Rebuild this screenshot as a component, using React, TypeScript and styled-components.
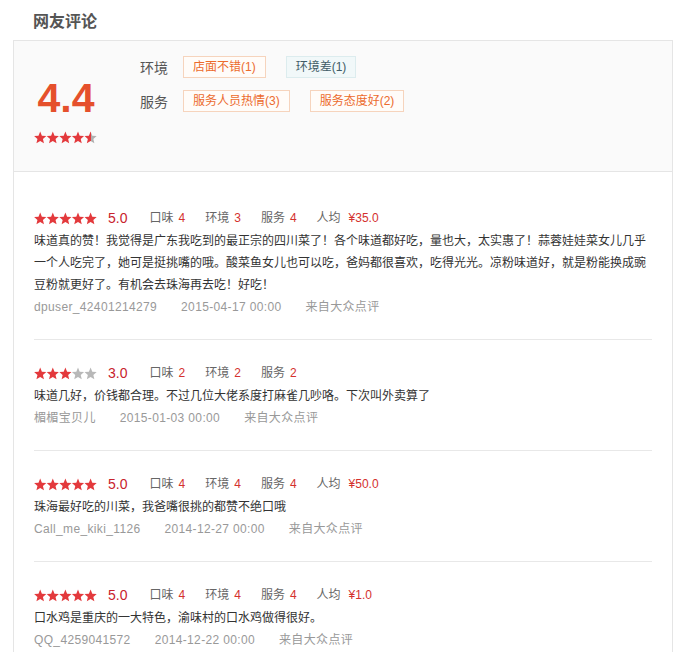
import * as React from 'react';
import styled, { createGlobalStyle } from 'styled-components';

const GlobalStyle = createGlobalStyle`
  html, body {
    margin: 0;
    padding: 0;
    background: #fff;
  }
  body {
    font-family: "Liberation Sans", Arial, "Noto Sans CJK SC", sans-serif;
    font-size: 12px;
    color: #333;
  }
`;

type Review = {
  score: number;
  taste: number;
  env: number;
  service: number;
  price?: string;
  text: string;
  user: string;
  time: string;
};

const reviews: Review[] = [
  {
    score: 5,
    taste: 4,
    env: 3,
    service: 4,
    price: '¥35.0',
    text: '味道真的赞！我觉得是广东我吃到的最正宗的四川菜了！各个味道都好吃，量也大，太实惠了！蒜蓉娃娃菜女儿几乎一个人吃完了，她可是挺挑嘴的哦。酸菜鱼女儿也可以吃，爸妈都很喜欢，吃得光光。凉粉味道好，就是粉能换成豌豆粉就更好了。有机会去珠海再去吃！好吃！',
    user: 'dpuser_42401214279',
    time: '2015-04-17 00:00',
  },
  {
    score: 3,
    taste: 2,
    env: 2,
    service: 2,
    text: '味道几好，价钱都合理。不过几位大佬系度打麻雀几吵咯。下次叫外卖算了',
    user: '楣楣宝贝儿',
    time: '2015-01-03 00:00',
  },
  {
    score: 5,
    taste: 4,
    env: 4,
    service: 4,
    price: '¥50.0',
    text: '珠海最好吃的川菜，我爸嘴很挑的都赞不绝口哦',
    user: 'Call_me_kiki_1126',
    time: '2014-12-27 00:00',
  },
  {
    score: 5,
    taste: 4,
    env: 4,
    service: 4,
    price: '¥1.0',
    text: '口水鸡是重庆的一大特色，渝味村的口水鸡做得很好。',
    user: 'QQ_4259041572',
    time: '2014-12-22 00:00',
  },
];

const starPoints = (cx: number, cy: number, r: number) => {
  const pts: string[] = [];
  for (let i = 0; i < 10; i++) {
    const rad = i % 2 === 0 ? r : r * 0.45;
    const a = (Math.PI / 5) * i - Math.PI / 2;
    pts.push(`${(cx + rad * Math.cos(a)).toFixed(2)},${(cy + rad * Math.sin(a)).toFixed(2)}`);
  }
  return pts.join(' ');
};

let gradId = 0;

const Stars = ({ value }: { value: number }) => {
  const id = React.useMemo(() => `star-half-${gradId++}`, []);
  const pitch = 12.6;
  return (
    <StarSvg width={64} height={13} viewBox="0 0 64 13">
      <defs>
        <linearGradient id={id} x1="0" x2="1" y1="0" y2="0">
          <stop offset="50%" stopColor="#e3393c" />
          <stop offset="50%" stopColor="#b0b0b0" />
        </linearGradient>
      </defs>
      {[0, 1, 2, 3, 4].map((i) => {
        const fill =
          value >= i + 1 ? '#e3393c' : value > i ? `url(#${id})` : '#b8b8b8';
        return <polygon key={i} points={starPoints(6.2 + i * pitch, 7, 6.4)} fill={fill} />;
      })}
    </StarSvg>
  );
};

export default function App() {
  return (
    <>
      <GlobalStyle />
      <Page>
        <Title>网友评论</Title>
        <Box>
          <Summary>
            <ScoreCol>
              <BigScore>4.4</BigScore>
              <Stars value={4.5} />
            </ScoreCol>
            <TagGroups>
              <TagRow>
                <TagLabel>环境</TagLabel>
                <Tag>店面不错(1)</Tag>
                <Tag $bad>环境差(1)</Tag>
              </TagRow>
              <TagRow>
                <TagLabel>服务</TagLabel>
                <Tag>服务人员热情(3)</Tag>
                <Tag>服务态度好(2)</Tag>
              </TagRow>
            </TagGroups>
          </Summary>
          <List>
            {reviews.map((r, i) => (
              <Item key={i}>
                <RatingRow>
                  <Stars value={r.score} />
                  <Score>{r.score.toFixed(1)}</Score>
                  <Metric>
                    口味<Value>{r.taste}</Value>
                  </Metric>
                  <Metric>
                    环境<Value>{r.env}</Value>
                  </Metric>
                  <Metric>
                    服务<Value>{r.service}</Value>
                  </Metric>
                  {r.price && (
                    <Metric>
                      人均<Value $price>{r.price}</Value>
                    </Metric>
                  )}
                </RatingRow>
                <Text>{r.text}</Text>
                <Meta>
                  <MetaItem>{r.user}</MetaItem>
                  <MetaItem>{r.time}</MetaItem>
                  <MetaItem>来自大众点评</MetaItem>
                </Meta>
              </Item>
            ))}
          </List>
        </Box>
      </Page>
    </>
  );
}

const Page = styled.div`
  width: 688px;
`;

const Title = styled.h2`
  margin: 0 0 0 33px;
  height: 40px;
  line-height: 40px;
  font-size: 16px;
  font-weight: bold;
  color: #555;
  font-family: "Noto Sans CJK SC", sans-serif;
`;

const Box = styled.div`
  margin-left: 13px;
  width: 658px;
  border: 1px solid #e5e5e5;
  border-bottom: none;
`;

const Summary = styled.div`
  display: flex;
  height: 130px;
  background: #fafafa;
  border-bottom: 1px solid #e5e5e5;
`;

const ScoreCol = styled.div`
  width: 104px;
  display: flex;
  flex-direction: column;
  align-items: center;
  padding-top: 36px;
  box-sizing: border-box;
`;

const BigScore = styled.div`
  font-family: "Liberation Sans", Arial, sans-serif;
  font-size: 41px;
  line-height: 42px;
  font-weight: bold;
  color: #e5502c;
  margin-bottom: 12px;
`;

const StarSvg = styled.svg`
  display: block;
  flex: none;
`;

const TagGroups = styled.div`
  padding: 15px 0 0 22px;
  display: flex;
  flex-direction: column;
  gap: 12px;
`;

const TagRow = styled.div`
  display: flex;
  align-items: center;
  gap: 20px;
`;

const TagLabel = styled.span`
  font-family: "Noto Sans CJK SC", sans-serif;
  font-size: 14px;
  color: #555;
  white-space: nowrap;
  width: 28px;
  margin-right: -5px;
`;

const Tag = styled.span<{ $bad?: boolean }>`
  display: inline-block;
  white-space: nowrap;
  height: 20px;
  line-height: 20px;
  padding: 0 9px;
  font-size: 12px;
  border: 1px solid ${(p) => (p.$bad ? '#dcecee' : '#f6d4bd')};
  background: ${(p) => (p.$bad ? '#f1f8f9' : '#fffcf9')};
  color: ${(p) => (p.$bad ? '#3f5b66' : '#ec6b2d')};
`;

const List = styled.div`
  padding-top: 13px;
`;

const Item = styled.div`
  margin: 0 20px;
  padding: 22px 0 21px;
  & + & {
    border-top: 1px solid #e8e8e8;
  }
`;

const RatingRow = styled.div`
  display: flex;
  align-items: center;
  height: 22px;
`;

const Score = styled.span`
  margin: 0 22px 0 10px;
  font-size: 14px;
  color: #c8232c;
  line-height: 22px;
`;

const Metric = styled.span`
  margin-right: 20px;
  font-size: 12px;
  color: #666;
  line-height: 22px;
`;

const Value = styled.span<{ $price?: boolean }>`
  margin-left: ${(p) => (p.$price ? '8px' : '5px')};
  color: #d4312e;
`;

const Text = styled.p`
  margin: 1px 0 0;
  width: 618px;
  font-size: 12px;
  line-height: 22px;
  color: #333;
`;

const Meta = styled.div`
  display: flex;
  height: 22px;
  line-height: 22px;
  color: #999;
  font-size: 12px;
  letter-spacing: 0.35px;
`;

const MetaItem = styled.span`
  margin-right: 24px;
`;
